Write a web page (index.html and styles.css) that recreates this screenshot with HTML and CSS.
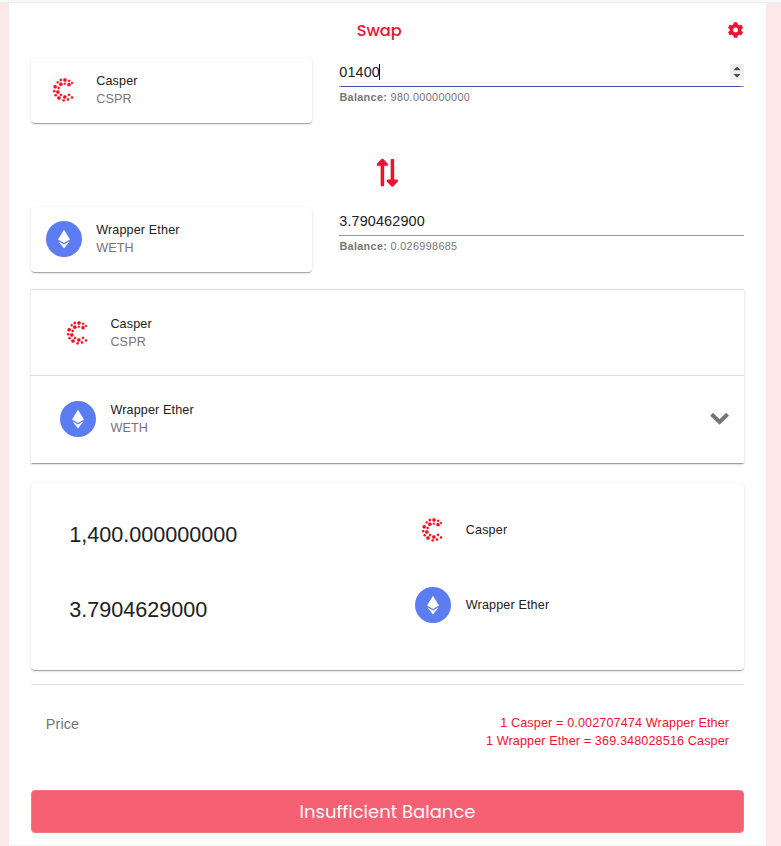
FILE: index.html
```html
<!DOCTYPE html>
<html lang="en">
<head>
<meta charset="utf-8">
<title>Swap</title>
<link rel="stylesheet" href="styles.css">
</head>
<body>
<svg width="0" height="0" class="defs">
  <symbol id="casper" viewBox="18 21 108 108">
    <g fill="#fb0d20" stroke="#fb0d20" stroke-width="0.8">
      <circle cx="62.500" cy="45" r="3.600"/><circle cx="75" cy="45" r="5.200"/><circle cx="87.500" cy="47.500" r="3.400"/>
      <circle cx="96" cy="54" r="3.200"/><circle cx="87" cy="59" r="5"/><circle cx="62.500" cy="57.500" r="5.200"/>
      <circle cx="74.500" cy="56" r="3"/><circle cx="53" cy="52" r="3.400"/><circle cx="45.500" cy="65.500" r="5.200"/>
      <circle cx="56" cy="69" r="3.500"/><circle cx="42.500" cy="78.500" r="3.500"/><circle cx="53.500" cy="81" r="5.200"/>
      <circle cx="47" cy="90.500" r="3.500"/><circle cx="57" cy="99" r="5.300"/><circle cx="63" cy="90" r="3.400"/>
      <circle cx="74.500" cy="96" r="5.200"/><circle cx="87" cy="89.500" r="3.500"/><circle cx="96" cy="97.500" r="3.500"/>
      <circle cx="84" cy="103.500" r="3.500"/><circle cx="71" cy="106" r="3.600"/>
    </g>
  </symbol>
  <symbol id="ether" viewBox="0 0 108 108">
    <circle cx="54" cy="54" r="54" fill="#5c7cf2"/>
    <path fill="#fff" d="M54 26 72 55.500 54 66 36 55.500Z"/>
    <path fill="#fff" d="M37 60.500 54 70.500 71 60.500 54 82.500Z"/>
  </symbol>
</svg>
<div class="topbar"></div>
<main class="panel">
  <header class="head">
    <h1>Swap</h1>
    <svg class="gear" viewBox="14 0 512 512"><path fill="currentColor" d="M487.400 315.700l-42.600-24.600c4.300-23.200 4.300-47 0-70.200l42.600-24.600c4.900-2.800 7.100-8.600 5.500-14-11.100-35.600-30-67.800-54.700-94.600-3.800-4.100-10-5.100-14.800-2.300L380.800 110c-17.900-15.400-38.500-27.300-60.800-35.100V25.800c0-5.600-3.900-10.500-9.400-11.700-36.700-8.200-74.300-7.800-109.200 0-5.500 1.200-9.400 6.100-9.400 11.700V75c-22.200 7.900-42.800 19.800-60.800 35.100L88.700 85.500c-4.900-2.800-11-1.900-14.800 2.300-24.700 26.700-43.600 58.900-54.700 94.600-1.700 5.400.6 11.200 5.500 14L67.300 221c-4.300 23.200-4.300 47 0 70.200l-42.600 24.600c-4.900 2.800-7.100 8.600-5.500 14 11.100 35.600 30 67.800 54.700 94.600 3.800 4.100 10 5.100 14.800 2.300l42.600-24.600c17.900 15.400 38.500 27.300 60.800 35.100v49.200c0 5.600 3.900 10.500 9.400 11.700 36.700 8.200 74.300 7.800 109.200 0 5.500-1.200 9.400-6.100 9.400-11.700v-49.200c22.200-7.900 42.800-19.800 60.800-35.100l42.600 24.600c4.900 2.800 11 1.900 14.800-2.300 24.700-26.700 43.600-58.900 54.700-94.600 1.500-5.500-.7-11.300-5.600-14.100zM256 336c-44.100 0-80-35.900-80-80s35.900-80 80-80 80 35.900 80 80-35.900 80-80 80z"/></svg>
  </header>

  <section class="row">
    <div class="card token">
      <svg class="avatar"><use href="#casper"/></svg>
      <div class="names"><div>Casper</div><div class="muted">CSPR</div></div>
    </div>
    <div class="field">
      <div class="input focused">
        <span class="value">01400</span><span class="caret"></span>
        <svg class="spinner" viewBox="0 0 14 16"><path fill="#505050" d="M3.500 6.200 6.500 3h1l3 3.200ZM3.500 10h7l-3 3.200h-1Z"/></svg>
      </div>
      <div class="helper"><b>Balance:</b> 980.000000000</div>
    </div>
  </section>

  <div class="switch">
    <svg viewBox="51 39 66 87"><path fill="#ee1131" d="M67 41 Q69 41 71 43L83 56Q86 62 80 62.500H72.500V121Q72.500 124 69.500 124H65Q62 124 62 121V62.500H54Q48 62 51 56L63 43Q65 41 67 41ZM97 125Q99 125 101 123L113 110Q116 104 110 103.500H102.500V45Q102.500 42 99.500 42H95Q92 42 92 45V103.500H84Q78 104 81 110L93 123Q95 125 97 125Z"/></svg>
  </div>

  <section class="row">
    <div class="card token">
      <svg class="avatar"><use href="#ether"/></svg>
      <div class="names"><div>Wrapper Ether</div><div class="muted">WETH</div></div>
    </div>
    <div class="field">
      <div class="input"><span class="value">3.790462900</span></div>
      <div class="helper"><b>Balance:</b> 0.026998685</div>
    </div>
  </section>

  <section class="pair">
    <div class="pair-row">
      <svg class="avatar"><use href="#casper"/></svg>
      <div class="names"><div>Casper</div><div class="muted">CSPR</div></div>
    </div>
    <div class="pair-row last">
      <svg class="avatar"><use href="#ether"/></svg>
      <div class="names"><div>Wrapper Ether</div><div class="muted">WETH</div></div>
      <svg class="chevron" viewBox="0 0 20 13"><path d="M1.600 2.300 9.600 10 17.600 2.300" fill="none" stroke="#757575" stroke-width="4"/></svg>
    </div>
  </section>

  <section class="card summary">
    <div class="amount">1,400.000000000</div>
    <div class="asset"><svg class="avatar"><use href="#casper"/></svg><span>Casper</span></div>
    <div class="amount">3.7904629000</div>
    <div class="asset"><svg class="avatar"><use href="#ether"/></svg><span>Wrapper Ether</span></div>
  </section>

  <section class="price">
    <div class="label">Price</div>
    <div class="rates"><div>1 Casper = 0.002707474 Wrapper Ether</div><div>1 Wrapper Ether = 369.348028516 Casper</div></div>
  </section>

  <button class="submit" disabled>Insufficient Balance</button>
</main>
</body>
</html>
```
FILE: styles.css
```css
* { box-sizing: border-box; }
body {
  margin: 0;
  height: 846px;
  overflow: hidden;
  background: #fce8e9;
  color: #212121;
  font: 12.6px/18px "Liberation Sans", Arial, sans-serif;
  letter-spacing: 0.135px;
}
svg { display: block; flex: none; }
.defs { position: absolute; }
.topbar { height: 3px; background: #f8f9fa; border-bottom: 1px solid #eeeeee; }
.panel {
  width: 757px;
  height: 843px;
  margin-left: 9px;
  padding: 0 22px;
  background: #fff;
  border-bottom: 1px solid #f3f3f3;
}
.head {
  display: grid;
  grid-template-columns: 16px 1fr 16px;
  align-items: center;
  height: 55px;
  padding-bottom: 1px;
  color: #ee1131;
}
.head h1 {
  grid-column: 2;
  margin: 0 16.5px 0 0;
  padding-top: 2px;
  text-align: center;
  font: 500 16.2px/24px Poppins, Inter, sans-serif;
  letter-spacing: 0;
}
.gear { width: 16px; height: 16px; overflow: visible; }
.row { display: grid; grid-template-columns: 281px 405px; column-gap: 27px; height: 65px; }
.card {
  border-radius: 4px;
  background: #fff;
  box-shadow: 0 2px 1px -1px rgba(0,0,0,.2), 0 1px 1px 0 rgba(0,0,0,.14), 0 1px 3px 0 rgba(0,0,0,.12);
}
.token { display: flex; align-items: center; gap: 14.2px; padding: 0 0 1px 15px; }
.avatar { width: 36px; height: 36px; }
.muted, .helper { color: #757575; }
.input {
  display: flex;
  align-items: center;
  height: 29px;
  padding-left: 0.3px;
  border-bottom: 1px solid #949494;
  font-size: 14.4px;
}
.focused {
  border-image: linear-gradient(90deg, #949494 3px, #3f51b5 3px, #3f51b5 401px, #949494 401px) 1;
}
.caret { width: 1px; height: 16px; margin-left: -1px; background: #000; }
.spinner { width: 14px; height: 16px; margin-left: auto; background: #efefef; }
.helper { margin-top: 1px; padding-left: 0.4px; font-size: 10.8px; letter-spacing: 0.35px; }
.switch { display: flex; justify-content: center; height: 84px; padding-top: 35px; }
.switch svg { width: 22px; height: 29px; overflow: visible; }
.pair {
  margin-top: 17px;
  border-top: 1px solid #dcdcdc;
  box-shadow: 0 2px 1px -1px rgba(0,0,0,.2), 0 1px 1px 0 rgba(0,0,0,.14), 0 1px 3px 0 rgba(0,0,0,.12);
}
.pair-row { display: flex; align-items: center; gap: 14.400px; height: 85px; padding: 0 14.5px 0 29px; }
.pair-row.last { height: 88px; padding-bottom: 1px; border-top: 1px solid #dcdcdc; }
.chevron { width: 20px; height: 13px; margin: 0 0 1px auto; overflow: visible; }
.summary {
  display: grid;
  grid-template-columns: 346px 1fr;
  grid-template-rows: 75px 75px;
  align-items: center;
  height: 187px;
  margin-top: 20px;
  padding: 9px 0 0 38px;
}
.amount { padding: 10px 0 0 0.2px; font-size: 21.6px; line-height: 29px; letter-spacing: 0; }
.asset { display: flex; align-items: center; gap: 14.800px; }
.price {
  display: flex;
  justify-content: space-between;
  height: 106px;
  margin-top: 14px;
  padding: 29px 14.8px 0 14.8px;
  border-top: 1px solid #e0e0e0;
}
.label { color: #757575; font-size: 14.4px; line-height: 20px; }
.rates { text-align: right; color: #ee1131; }
.submit {
  display: block;
  width: 100%;
  height: 43px;
  padding: 0;
  border: 1px solid #f4797f;
  border-radius: 4px;
  background: #f56073;
  color: #fff;
  font: 400 18px/27px Poppins, Inter, sans-serif;
  letter-spacing: 0;
}
```
